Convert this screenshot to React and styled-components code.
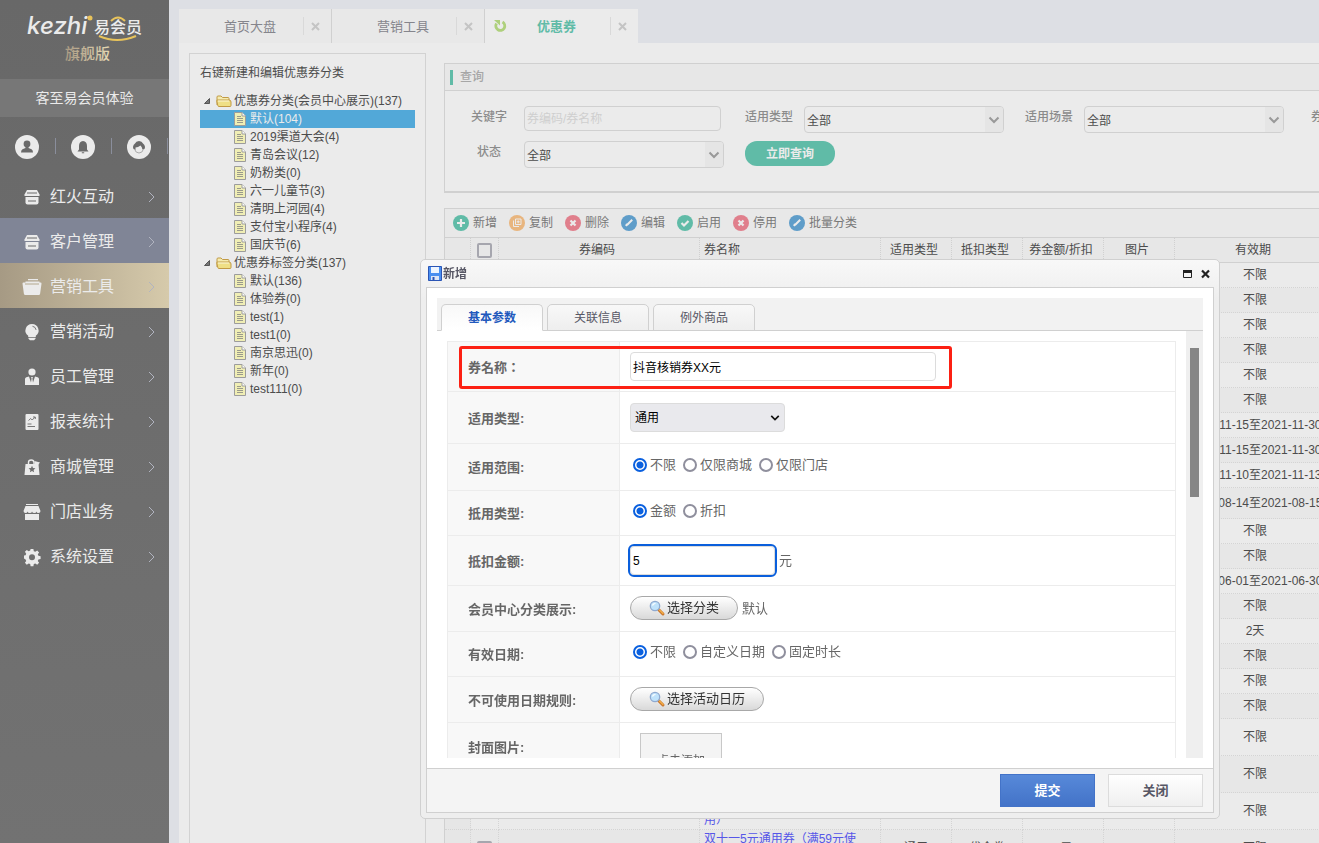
import React, { useState } from 'react';
import styled, { createGlobalStyle } from 'styled-components';

const menu = [
  { icon: 'shop', label: '红火互动' },
  { icon: 'shop', label: '客户管理', tone: 'blue' },
  { icon: 'wallet', label: '营销工具', tone: 'gold' },
  { icon: 'bulb', label: '营销活动' },
  { icon: 'staff', label: '员工管理' },
  { icon: 'report', label: '报表统计' },
  { icon: 'bag', label: '商城管理' },
  { icon: 'store', label: '门店业务' },
  { icon: 'gear', label: '系统设置' },
];

const tree = [
  {
    label: '优惠券分类(会员中心展示)(137)',
    items: ['默认(104)', '2019渠道大会(4)', '青岛会议(12)', '奶粉类(0)', '六一儿童节(3)', '清明上河园(4)', '支付宝小程序(4)', '国庆节(6)'],
  },
  {
    label: '优惠券标签分类(137)',
    items: ['默认(136)', '体验券(0)', 'test(1)', 'test1(0)', '南京思迅(0)', '新年(0)', 'test111(0)'],
  },
];

const tools = [
  { icon: 'plus', color: '#60bba7', label: '新增' },
  { icon: 'copy', color: '#e8b57e', label: '复制' },
  { icon: 'cross', color: '#e07f8c', label: '删除' },
  { icon: 'pen', color: '#5f9dc9', label: '编辑' },
  { icon: 'check', color: '#60bba7', label: '启用' },
  { icon: 'cross', color: '#e07f8c', label: '停用' },
  { icon: 'pen', color: '#5f9dc9', label: '批量分类' },
];

const columns = [
  { width: 26 },
  { width: 28, check: true },
  { width: 201, label: '券编码' },
  { width: 181, label: '券名称', left: true },
  { width: 71, label: '适用类型' },
  { width: 71, label: '抵扣类型' },
  { width: 81, label: '券金额/折扣' },
  { width: 71, label: '图片' },
  { width: 161, label: '有效期' },
];

const rows = [
  { valid: '不限' },
  { valid: '不限' },
  { valid: '不限' },
  { valid: '不限' },
  { valid: '不限' },
  { valid: '不限' },
  { valid: '2021-11-15至2021-11-30' },
  { valid: '2021-11-15至2021-11-30' },
  { valid: '2021-11-10至2021-11-13' },
  { valid: '2021-08-14至2021-08-15', height: 31 },
  { valid: '不限' },
  { valid: '不限' },
  { valid: '2021-06-01至2021-06-30' },
  { valid: '不限' },
  { valid: '2天' },
  { valid: '不限' },
  { valid: '不限' },
  { valid: '不限' },
  { valid: '不限', height: 37 },
  { valid: '不限', height: 37 },
  { valid: '不限', height: 37, name: '双十二5元通用券（满59元使用）' },
  { valid: '不限', height: 37, name: '双十一5元通用券（满59元使用）', type: '通用', kind: '代金券', amount: '5元' },
];

const menuIcons = {
  shop: (
    <>
      <path d="M5 3h10l2.500 4.500v1.500h-15V7.500z" />
      <path d="M3.500 10h13v5.500q0 2-2 2h-9q-2 0-2-2z" />
      <path d="M5 6h10M6 14h8" stroke="#6b6b6b" strokeWidth="1" />
    </>
  ),
  wallet: (
    <>
      <path d="M6 2h10v1.200H6zM3.500 4.500h14v1.800h-14z" />
      <path d="M.5 6.500q0-1 1-1h17q1.200 0 1 1.200l-1.400 10q-.2 1.300-1.400 1.300H3.300q-1.200 0-1.400-1.300z" />
      <path d="M3 7h14" stroke="#b3a88e" strokeWidth="1" />
    </>
  ),
  bulb: (
    <>
      <path d="M10 2a6.500 6.500 0 0 0-3.800 11.800V15h7.600v-1.200A6.500 6.500 0 0 0 10 2z" />
      <path d="M6.500 15.800h7v1l-1.500 1.400H8l-1.500-1.400z" />
      <path d="M10.500 4.300q3 .3 3.600 3.600" fill="none" stroke="#777" strokeWidth="1" />
    </>
  ),
  staff: (
    <>
      <circle cx="10" cy="5" r="3.600" />
      <path d="M3 18v-6q0-1.300 1.300-1.800L7 9.500l2 6 .6-4L9 10h2l-.6 1.500.6 4 2-6 2.700.7q1.300.5 1.300 1.800v6z" />
    </>
  ),
  report: (
    <>
      <rect x="3.500" y="2" width="13" height="16" rx="1" />
      <path d="M6.500 8.500l2.200-2 1.500 1.500 3-3M11 5h2.300v2M5.500 12h4M5.500 14.500h7.500" fill="none" stroke="#777" strokeWidth="1" />
    </>
  ),
  bag: (
    <>
      <path d="M3.500 7h13l1 11h-15z" />
      <path d="M6.500 7V5.500q0-2.500 2.700-2.500t2.800 2.500V7" fill="none" stroke="#ebebeb" strokeWidth="1.400" />
      <path d="M12.500 4l5.500 1.500-2.500 3-3-1.500z" />
      <path d="M10 8.800l1 2.200 2.400.3-1.800 1.600.5 2.400-2.100-1.200-2.100 1.200.5-2.400-1.800-1.600 2.400-.3z" fill="#6f6f6f" />
    </>
  ),
  store: (
    <>
      <path d="M4 2h12v1H4z" />
      <path d="M3.500 4h13l2 5q0 2-2 2t-2-1.500q-.3 1.500-2.200 1.500T10 9.500Q9.800 11 7.800 11t-2.200-1.500Q5.300 11 3.500 11t-2-2z" />
      <path d="M3 12h14v6H3z" />
    </>
  ),
  gear: (
    <path
      fillRule="evenodd"
      d="M8.600 2h2.800l.4 2.200 1.500.6 1.900-1.300 1.900 1.900-1.300 1.900.6 1.500 2.200.4v2.800l-2.200.4-.6 1.500 1.300 1.900-1.900 1.900-1.900-1.300-1.500.6-.4 2.200H8.600l-.4-2.200-1.500-.6-1.900 1.300-1.900-1.900 1.300-1.900-.6-1.500L2 11.400V8.600l1.600-.4.600-1.500-1.300-1.900 1.900-1.900 1.900 1.300 1.500-.6zM10 7.200a3 3 0 1 0 0 6 3 3 0 1 0 0-6z"
    />
  ),
};

const toolIcons = {
  plus: <path d="M8 4v8M4 8h8" strokeWidth="2.200" />,
  copy: <path d="M6.500 4h5.500v5.500H6.500zM4.500 5.500V11.500h5.500M9.200 5.300v3M7.700 6.800h3" strokeWidth="1" />,
  cross: <path d="M5.500 5.500l5 5M10.500 5.500l-5 5" strokeWidth="2.200" />,
  pen: <path d="M5 11l1-2.200M6 10l5.200-5.200" strokeWidth="2" />,
  check: <path d="M4.500 8l2.500 2.500 4.500-4.500" strokeWidth="2.200" />,
};

function Logo() {
  return (
    <svg width="120" height="52" viewBox="0 0 120 52" aria-label="Kezhi易会员旗舰版">
      <defs>
        <linearGradient id="gold" x1="0" x2="1">
          <stop offset="0" stopColor="#a99a83" />
          <stop offset="1" stopColor="#e6d9b4" />
        </linearGradient>
      </defs>
      <text x="1" y="20" fill="#ebebeb" fontFamily="Inter, sans-serif" fontSize="24" fontStyle="italic" fontWeight="500">kezhi</text>
      <circle cx="64" cy="4" r="2.500" fill="#e8c35b" />
      <text x="68" y="19" fill="#ebebeb" fontFamily="'Noto Sans CJK SC', sans-serif" fontSize="16" fontWeight="500">易会员</text>
      <path d="M85 7q7-7 14 0" fill="none" stroke="#e8c35b" strokeWidth="2" />
      <path d="M73 22q18 8 37 0" fill="none" stroke="#e8c35b" strokeWidth="2.200" />
      <text x="39" y="45" fill="url(#gold)" fontFamily="'Noto Sans CJK SC', sans-serif" fontSize="15" fontWeight="500">旗舰版</text>
    </svg>
  );
}

function FolderIcon() {
  return (
    <svg width="16" height="14" viewBox="0 0 16 14">
      <path d="M1 11V3q0-1 1-1h3l1.500 1.500H12q1 0 1 1V6" fill="#f5ecb0" stroke="#c19a45" />
      <path d="M.8 7Q.6 6 1.600 6H13q2 0 2 2v3.500q0 1-1 1H3q-1 0-1.200-1z" fill="#efdf85" stroke="#c19a45" />
      <path d="M2 7h11" stroke="#fbf7da" />
    </svg>
  );
}

function PageIcon() {
  return (
    <svg width="12" height="14" viewBox="0 0 12 14">
      <path d="M.5.500h7.500l3.500 3.500v9.500H.5z" fill="#f0eeb4" stroke="#9c9c9c" />
      <path d="M8 .5V4h3.500" fill="#fff" stroke="#9c9c9c" />
      <path d="M3 4.500h4M3 6.500h6M3 8.500h6M3 10.500h6" stroke="#9a9a8c" />
    </svg>
  );
}

function Chevron({ color = '#999', size = 12 }) {
  return (
    <svg width={size} height="8" viewBox="0 0 12 8" fill="none" stroke={color} strokeWidth="2">
      <path d="M1.500 1.500L6 6l4.500-4.500" />
    </svg>
  );
}

function SearchIcon() {
  return (
    <svg width="16" height="16" viewBox="0 0 16 16">
      <path d="M9.500 9.500l4.500 4.500" stroke="#c9752b" strokeWidth="3" strokeLinecap="round" />
      <path d="M10.500 10l3.500 3.500" stroke="#f5b04a" strokeWidth="1.200" strokeLinecap="round" />
      <circle cx="6" cy="6" r="4.700" fill="#bfe2fb" stroke="#8fa9d0" strokeWidth="1.300" />
      <path d="M3.500 5.500Q4 3.500 6.500 3.500" fill="none" stroke="#fff" strokeWidth="1.200" />
    </svg>
  );
}

function CloseIcon() {
  return (
    <svg width="9" height="9" viewBox="0 0 9 9" stroke="#c4c4c4" strokeWidth="2">
      <path d="M1 1l7 7M8 1L1 8" />
    </svg>
  );
}

function FilterSelect({ id, label }) {
  return (
    <Filter>
      <FilterLabel htmlFor={id}>{label}</FilterLabel>
      <Combo>
        <select id={id}><option>全部</option></select>
        <ComboArrow><Chevron /></ComboArrow>
      </Combo>
    </Filter>
  );
}

function Radios({ name, options }) {
  return (
    <RadioGroup>
      {options.map((option, index) => (
        <label key={option}>
          <input type="radio" name={name} defaultChecked={index === 0} />
          {option}
        </label>
      ))}
    </RadioGroup>
  );
}

function CouponDialog() {
  const [tab, setTab] = useState('基本参数');

  return (
    <Dialog role="dialog" aria-label="新增">
      <DialogTitle>
        <svg width="14" height="15" viewBox="0 0 14 15">
          <path d="M.5.500h13v14H.5z" fill="#4a8ff0" stroke="#2b55b5" />
          <path d="M3 1h8v6H3z" fill="#eef5ff" />
          <path d="M3 10h8v4H3z" fill="#dfe6f5" />
          <path d="M4.500 11h2v3h-2z" fill="#2b55b5" />
        </svg>
        <strong>新增</strong>
        <WindowButton aria-label="最大化">
          <svg width="9" height="8" viewBox="0 0 9 8"><path d="M.5 1h8v6.500h-8z" fill="none" stroke="#222" /><path d="M0 0h9v3H0z" fill="#222" /></svg>
        </WindowButton>
        <WindowButton aria-label="关闭窗口">
          <svg width="9" height="8" viewBox="0 0 9 8"><path d="M1 .5l7 7M8 .5l-7 7" stroke="#222" strokeWidth="2.200" /></svg>
        </WindowButton>
      </DialogTitle>
      <DialogBody>
        <FormArea>
          <FormTabs>
            {['基本参数', '关联信息', '例外商品'].map((name) => (
              <FormTab key={name} $active={tab === name} onClick={() => setTab(name)}>{name}</FormTab>
            ))}
          </FormTabs>
          <FormScroll>
            <FormTable>
              <tbody>
                <FormRow $height={50}>
                  <th><NameLabel htmlFor="name">券名称：</NameLabel></th>
                  <td><TextBox id="name" $wide defaultValue="抖音核销券XX元" /></td>
                </FormRow>
                <FormRow $height={52}>
                  <th><label htmlFor="kind">适用类型:</label></th>
                  <td>
                    <KindSelect>
                      <select id="kind"><option>通用</option></select>
                      <Chevron color="#111" size={10} />
                    </KindSelect>
                  </td>
                </FormRow>
                <FormRow $height={47}>
                  <th>适用范围:</th>
                  <td><Radios name="scope" options={['不限', '仅限商城', '仅限门店']} /></td>
                </FormRow>
                <FormRow $height={45}>
                  <th>抵用类型:</th>
                  <td><Radios name="deduct" options={['金额', '折扣']} /></td>
                </FormRow>
                <FormRow $height={50}>
                  <th><label htmlFor="amount">抵扣金额:</label></th>
                  <td>
                    <Inline>
                      <TextBox id="amount" defaultValue="5" autoFocus />
                      <span>元</span>
                    </Inline>
                  </td>
                </FormRow>
                <FormRow $height={46}>
                  <th>会员中心分类展示:</th>
                  <td>
                    <Inline>
                      <PickButton><SearchIcon />选择分类</PickButton>
                      <span>默认</span>
                    </Inline>
                  </td>
                </FormRow>
                <FormRow $height={45}>
                  <th>有效日期:</th>
                  <td><Radios name="valid" options={['不限', '自定义日期', '固定时长']} /></td>
                </FormRow>
                <FormRow $height={46}>
                  <th>不可使用日期规则:</th>
                  <td><PickButton><SearchIcon />选择活动日历</PickButton></td>
                </FormRow>
                <FormRow $height={102}>
                  <th className="top">封面图片:</th>
                  <td className="top"><Cover>点击添加</Cover></td>
                </FormRow>
              </tbody>
            </FormTable>
            <ScrollTrack><ScrollThumb /></ScrollTrack>
            <Highlight />
          </FormScroll>
        </FormArea>
        <DialogFooter>
          <FooterButton $primary>提交</FooterButton>
          <FooterButton>关闭</FooterButton>
        </DialogFooter>
      </DialogBody>
    </Dialog>
  );
}

export default function App() {
  const [selected, setSelected] = useState('默认(104)');

  return (
    <Page>
      <GlobalStyle />
      <Sidebar>
        <Brand><Logo /></Brand>
        <Account>客至易会员体验</Account>
        <Shortcuts>
          <Round aria-label="账户">
            <svg viewBox="0 0 24 24"><circle cx="12" cy="9" r="3.400" /><path d="M10.500 11h3v2l3 1.200q1.500.8 1.500 3.300H6q0-2.500 1.500-3.300l3-1.200z" /></svg>
          </Round>
          <Round aria-label="通知">
            <svg viewBox="0 0 24 24"><path d="M12 6q4 .5 4 5v3.500l1.500 2h-11l1.500-2V11q0-4.500 4-5zM10.800 17.300h2.400v1h-2.400z" /></svg>
          </Round>
          <Round aria-label="客服">
            <svg viewBox="0 0 24 24"><path d="M6.500 14Q5 11 8 8.500q1-2.500 4-2.500t4 2.500q3 2.500 1.500 5.500l-2 .5Q15 12 13.500 10.500 11 12.500 8.500 12.500V15z" /><path d="M7.500 14q1 4 4.500 4t4.500-4" fill="none" stroke="#aaa" /></svg>
          </Round>
        </Shortcuts>
        <nav>
          {menu.map((item) => (
            <MenuItem key={item.label} href="#" $tone={item.tone}>
              <svg width="20" height="20" viewBox="0 0 20 20" fill="#ebebeb">{menuIcons[item.icon]}</svg>
              <span>{item.label}</span>
              <svg width="7" height="12" viewBox="0 0 7 12" fill="none" stroke="#b1b4c0"><path d="M1 1l5 5-5 5" /></svg>
            </MenuItem>
          ))}
        </nav>
      </Sidebar>
      <Main>
        <PageTabs>
          <PageTab><TabName>首页大盘</TabName><TabClose aria-label="关闭首页大盘"><CloseIcon /></TabClose></PageTab>
          <PageTab><TabName>营销工具</TabName><TabClose aria-label="关闭营销工具"><CloseIcon /></TabClose></PageTab>
          <PageTab $active>
            <Refresh aria-label="刷新">
              <svg width="14" height="14" viewBox="0 0 14 14"><path d="M9.500 3a4.500 4.500 0 1 1-6 1.500" fill="none" stroke="#aed07c" strokeWidth="2.800" /><path d="M1 1h6v5.500z" fill="#aed07c" /></svg>
            </Refresh>
            <TabName $active>优惠券</TabName>
            <TabClose aria-label="关闭优惠券"><CloseIcon /></TabClose>
          </PageTab>
        </PageTabs>
        <Workspace>
          <TreePanel>
            <p>右键新建和编辑优惠券分类</p>
            {tree.map((group) => (
              <ul key={group.label}>
                <TreeNode>
                  <svg width="6" height="6" viewBox="0 0 6 6"><path d="M5.500.500v5H.5z" fill="#777" stroke="#555" /></svg>
                  <FolderIcon />
                  {group.label}
                </TreeNode>
                {group.items.map((item) => (
                  <TreeLeaf key={item} $active={selected === item} onClick={() => setSelected(item)}>
                    <PageIcon />
                    {item}
                  </TreeLeaf>
                ))}
              </ul>
            ))}
          </TreePanel>
          <Content>
            <QueryPanel>
              <h2>查询</h2>
              <Filters>
                <FilterLine>
                  <Filter>
                    <FilterLabel htmlFor="keyword">关键字</FilterLabel>
                    <Keyword id="keyword" placeholder="券编码/券名称" />
                  </Filter>
                  <FilterSelect id="type" label="适用类型" />
                  <FilterSelect id="scene" label="适用场景" />
                  <FilterSelect id="category" label="券分类" />
                </FilterLine>
                <FilterLine>
                  <FilterSelect id="status" label="状态" />
                  <QueryButton>立即查询</QueryButton>
                </FilterLine>
              </Filters>
            </QueryPanel>
            <Grid>
              <Toolbar>
                {tools.map((tool) => (
                  <ToolButton key={tool.label}>
                    <svg width="16" height="16" viewBox="0 0 16 16" fill="none" stroke="#ebebeb">
                      <circle cx="8" cy="8" r="8" fill={tool.color} stroke="none" />
                      {toolIcons[tool.icon]}
                    </svg>
                    {tool.label}
                  </ToolButton>
                ))}
              </Toolbar>
              <CouponTable>
                <colgroup>
                  {columns.map((column, index) => <Col key={index} $width={column.width} />)}
                </colgroup>
                <thead>
                  <tr>
                    {columns.map((column, index) => (
                      <HeadCell key={index} $left={column.left}>
                        {column.check ? <Check type="checkbox" aria-label="全选" /> : column.label}
                      </HeadCell>
                    ))}
                  </tr>
                </thead>
                <tbody>
                  {rows.map((row, index) => (
                    <CouponRow key={index} $height={row.height || 25}>
                      <td />
                      <td><Check type="checkbox" aria-label="选择" /></td>
                      <td />
                      <NameCell>{row.name && <a href="#">{row.name}</a>}</NameCell>
                      <td>{row.type}</td>
                      <td>{row.kind}</td>
                      <td>{row.amount}</td>
                      <td />
                      <td>{row.valid}</td>
                    </CouponRow>
                  ))}
                </tbody>
              </CouponTable>
            </Grid>
          </Content>
        </Workspace>
      </Main>
      <CouponDialog />
    </Page>
  );
}

const GlobalStyle = createGlobalStyle`
  * {
    box-sizing: border-box;
  }
  body {
    margin: 0;
    background: #ebebeb;
    color: #4c4c4c;
    font: 12px/18px "Liberation Sans", "Noto Sans CJK SC", sans-serif;
  }
  button, input, select {
    margin: 0;
    font: inherit;
  }
  button {
    padding: 0;
    border: 0;
    background: none;
    color: inherit;
    cursor: pointer;
  }
  ul, p, h2 {
    margin: 0;
    padding: 0;
    list-style: none;
  }
  svg {
    flex: none;
    overflow: visible;
  }
`;

const Page = styled.div`
  display: flex;
  height: 100vh;
  overflow: hidden;
`;

const Sidebar = styled.aside`
  flex: none;
  width: 169px;
  background: linear-gradient(#686868, #727272);
  color: #ebebeb;
`;

const Brand = styled.div`
  display: flex;
  justify-content: center;
  height: 79px;
  padding: 14px 0 0 3px;
`;

const Account = styled.div`
  padding: 8px 0;
  background: #777;
  font-size: 14px;
  line-height: 22px;
  text-align: center;
`;

const Shortcuts = styled.div`
  display: flex;
  align-items: center;
  gap: 32px;
  padding: 18px 15px 14px;
`;

const Round = styled.button`
  position: relative;
  width: 24px;
  height: 24px;
  border-radius: 50%;
  background: #ebebeb;
  svg {
    display: block;
    fill: #6a6a6a;
  }
  &::after {
    content: '';
    position: absolute;
    top: 3px;
    right: -17px;
    width: 1px;
    height: 16px;
    background: #8a8e9c;
  }
`;

const tones = {
  blue: '#808596',
  gold: 'linear-gradient(90deg, #a69a84, #d6caab)',
};

const MenuItem = styled.a`
  display: flex;
  align-items: center;
  height: 45px;
  padding: 2px 14px 0 22px;
  background: ${(props) => tones[props.$tone] || 'none'};
  color: #ebebeb;
  font-size: 16px;
  line-height: 24px;
  text-decoration: none;
  span {
    flex: 1;
    padding-left: 8px;
  }
`;

const Main = styled.main`
  display: flex;
  flex: 1;
  flex-direction: column;
  min-width: 0;
  padding: 9px 0 0 10px;
  background: #dddfe4;
`;

const PageTabs = styled.div`
  display: flex;
  flex: none;
  height: 34px;
`;

const PageTab = styled.div`
  display: flex;
  align-items: center;
  width: 153px;
  border-right: ${(props) => (props.$active ? '0' : '1px solid #d0d0d0')};
  background: ${(props) => (props.$active ? '#ebebeb' : '#e8e8e8')};
  color: ${(props) => (props.$active ? '#60bba7' : '#85858c')};
  font-size: 13px;
  font-weight: ${(props) => (props.$active ? 'bold' : 'normal')};
`;

const TabName = styled.span`
  flex: 1;
  padding: ${(props) => (props.$active ? '2px 4px 0 0' : '2px 0 0 18px')};
  text-align: center;
`;

const TabClose = styled.button`
  display: flex;
  align-items: center;
  width: 28px;
  height: 18px;
  padding-left: 7px;
  border-left: 1px solid #d9d9d9;
`;

const Refresh = styled.button`
  display: flex;
  width: 14px;
  margin-left: 8px;
`;

const Workspace = styled.div`
  display: flex;
  flex: 1;
  gap: 18px;
  min-height: 0;
  padding: 10px 0 0 10px;
  background: #ebebeb;
`;

const TreePanel = styled.section`
  flex: none;
  width: 237px;
  padding: 10px;
  border: 1px solid #d2d2d2;
  border-bottom: 0;
  white-space: nowrap;
  p {
    padding-bottom: 10px;
  }
`;

const TreeNode = styled.li`
  display: flex;
  align-items: center;
  gap: 2px;
  height: 18px;
  padding-left: 4px;
  svg:first-child {
    margin-right: 4px;
  }
`;

const TreeLeaf = styled.li`
  display: flex;
  align-items: center;
  gap: 4px;
  height: 18px;
  padding-left: 34px;
  background: ${(props) => (props.$active ? '#52a8d8' : 'none')};
  color: ${(props) => (props.$active ? '#ebebeb' : 'inherit')};
  cursor: pointer;
`;

const Content = styled.section`
  display: flex;
  flex: 1;
  flex-direction: column;
  gap: 15px;
  min-width: 0;
  padding-top: 10px;
  overflow: hidden;
`;

const QueryPanel = styled.section`
  flex: none;
  border: 1px solid #d0d0d0;
  border-width: 1px 0 2px 1px;
  h2 {
    display: flex;
    align-items: center;
    height: 27px;
    border-bottom: 1px solid #d0d0d0;
    background: #e7e7e7;
    color: #a6a6a6;
    font-size: 12px;
    font-weight: 500;
  }
  h2::before {
    content: '';
    width: 3px;
    height: 15px;
    margin: 0 7px 0 5px;
    background: #60bba7;
  }
`;

const Filters = styled.form`
  display: flex;
  flex-direction: column;
  gap: 8px;
  padding: 15px 0 23px 20px;
`;

const FilterLine = styled.div`
  display: flex;
  align-items: flex-start;
`;

const Filter = styled.div`
  display: flex;
  flex: none;
  width: 280px;
`;

const FilterLabel = styled.label`
  width: 48px;
  margin-right: 11px;
  padding-top: 2px;
  color: #8b8b8b;
  font-weight: 500;
  text-align: center;
  white-space: nowrap;
`;

const Keyword = styled.input`
  width: 197px;
  height: 25px;
  padding: 2px;
  border: 1px solid #d0d0d0;
  border-radius: 4px;
  background: none;
  &::placeholder {
    color: #cfcfcf;
  }
`;

const Combo = styled.div`
  display: flex;
  width: 200px;
  height: 27px;
  border: 1px solid #d0d0d0;
  border-radius: 4px;
  overflow: hidden;
  select {
    flex: 1;
    padding: 2px 2px 0;
    border: 0;
    background: none;
    color: #4c4c4c;
    appearance: none;
  }
`;

const ComboArrow = styled.span`
  display: flex;
  align-items: center;
  justify-content: center;
  width: 18px;
  background: #e5e5e5;
`;

const QueryButton = styled.button`
  width: 90px;
  height: 25px;
  border-radius: 12px;
  background: #60bba7;
  color: #ebebeb;
  font-weight: bold;
`;

const Grid = styled.section`
  flex: 1;
  min-height: 0;
  border: 1px solid #d0d0d0;
  border-width: 1px 0 0 1px;
`;

const Toolbar = styled.div`
  display: flex;
  gap: 12px;
  padding: 5px 8px;
  border-bottom: 1px solid #d0d0d0;
  background: #e8e8e8;
`;

const ToolButton = styled.button`
  display: flex;
  align-items: center;
  gap: 4px;
  color: #787878;
`;

const CouponTable = styled.table`
  width: 891px;
  border-collapse: separate;
  border-spacing: 0;
  table-layout: fixed;
  text-align: center;
`;

const Col = styled.col`
  width: ${(props) => props.$width}px;
`;

const HeadCell = styled.th`
  height: 25px;
  padding: ${(props) => (props.$left ? '0 4px' : '0 4px 0 0')};
  border-right: 1px dotted #d0d0d0;
  border-bottom: 1px solid #d0d0d0;
  background: #e7e7e7;
  font-weight: normal;
  text-align: ${(props) => (props.$left ? 'left' : 'center')};
  white-space: nowrap;
`;

const CouponRow = styled.tr`
  height: ${(props) => props.$height}px;
  &:nth-child(even) {
    background: #e7e7e7;
  }
  td {
    padding: 0;
    border-right: 1px dotted #d4d4d4;
    border-bottom: 1px dotted #d4d4d4;
  }
  td:first-child {
    background: #e6e6e6;
  }
`;

const NameCell = styled.td`
  && {
    padding: 0 16px 0 4px;
    text-align: left;
  }
  a {
    color: #5656e8;
    text-decoration: none;
  }
`;

const Check = styled.input`
  display: block;
  width: 15px;
  height: 15px;
  margin: 0 auto;
  border: 2px solid #a6a6ae;
  border-radius: 2px;
  appearance: none;
  ${HeadCell} & {
    margin: 0 6px;
  }
`;

const Dialog = styled.section`
  position: fixed;
  inset: 259px 99px 24px 420px;
  display: flex;
  flex-direction: column;
  padding: 0 5px 5px;
  border: 1px solid #d0d0d0;
  border-radius: 5px;
  background: linear-gradient(#f8f8f8, #eee 40px);
  color: #666;
`;

const DialogTitle = styled.header`
  display: flex;
  align-items: center;
  height: 27px;
  padding-left: 2px;
  color: #575765;
  strong {
    flex: 1;
    padding-left: 1px;
  }
`;

const WindowButton = styled.button`
  display: flex;
  align-items: center;
  justify-content: center;
  width: 18px;
  height: 18px;
`;

const DialogBody = styled.div`
  display: flex;
  flex: 1;
  flex-direction: column;
  min-height: 0;
  border: 1px solid #d0d0d0;
`;

const FormArea = styled.div`
  display: flex;
  flex: 1;
  flex-direction: column;
  min-height: 0;
  padding: 10px;
  background: #fff;
`;

const FormTabs = styled.div`
  display: flex;
  flex: none;
  align-items: flex-end;
  gap: 4px;
  height: 33px;
  padding: 0 4px;
  border-bottom: 1px solid #d0d0d0;
  background: #f2f2f2;
`;

const FormTab = styled.button`
  width: 102px;
  height: 27px;
  margin-bottom: -1px;
  border: 1px solid #d0d0d0;
  border-bottom-color: ${(props) => (props.$active ? '#fff' : '#d0d0d0')};
  border-radius: 5px 5px 0 0;
  background: ${(props) => (props.$active ? 'linear-gradient(#f8f8f8, #fff)' : 'linear-gradient(#f8f8f8, #eee)')};
  color: ${(props) => (props.$active ? '#2259bd' : '#575765')};
  font-weight: ${(props) => (props.$active ? 'bold' : 'normal')};
`;

const FormScroll = styled.div`
  position: relative;
  display: flex;
  flex: 1;
  align-items: flex-start;
  min-height: 0;
  padding-left: 10px;
  overflow: hidden;
`;

const FormTable = styled.table`
  flex: 1;
  margin: 10px 10px 0 0;
  border: 1px solid #ececec;
  border-width: 1px 1px 0;
  border-spacing: 0;
  font-size: 13px;
`;

const FormRow = styled.tr`
  height: ${(props) => props.$height}px;
  th, td {
    padding: 0 0 0 10px;
    border-bottom: 1px solid #ececec;
    text-align: left;
  }
  th {
    width: 172px;
    padding: 2px 0 0 20px;
    border-right: 1px solid #ececec;
    background: #f8f8f8;
  }
  .top {
    padding-top: 10px;
    vertical-align: top;
  }
  th.top {
    padding-top: 16px;
  }
`;

/* the traditional face centres the full-width colon */
const NameLabel = styled.label`
  font-family: "Noto Sans CJK TC", sans-serif;
`;

const TextBox = styled.input`
  display: block;
  width: ${(props) => (props.$wide ? 306 : 145)}px;
  height: 29px;
  padding: 0 2px;
  border: 1px solid #dcdcdc;
  border-radius: 4px;
  background: #fff;
  color: #000;
  font-size: 12px;
  &:focus {
    outline: 2px solid #0a5fdc;
  }
`;

const KindSelect = styled.div`
  display: flex;
  align-items: center;
  width: 155px;
  height: 29px;
  padding-right: 4px;
  border: 1px solid #dcdcdc;
  border-radius: 4px;
  background: #e9e9ed;
  select {
    flex: 1;
    padding: 0 4px;
    border: 0;
    background: none;
    color: #000;
    font-size: 12px;
    appearance: none;
  }
`;

const RadioGroup = styled.div`
  display: flex;
  gap: 7px;
  padding: 0 0 4px 3px;
  label {
    display: flex;
    align-items: center;
    gap: 3px;
  }
  input {
    width: 14px;
    height: 14px;
    border: 2px solid #8f8f9d;
    border-radius: 50%;
    background: #fff;
    appearance: none;
  }
  input:checked {
    border-color: #0a60df;
    background: radial-gradient(#0a60df 3px, #fff 4px);
  }
`;

const Inline = styled.div`
  display: flex;
  align-items: center;
  gap: 4px;
`;

const PickButton = styled.button`
  display: flex;
  align-items: center;
  gap: 2px;
  height: 24px;
  margin-bottom: 2px;
  padding: 0 18px;
  border: 1px solid #a8a8a8;
  border-radius: 12px;
  background: linear-gradient(#fff, #d9d9d9);
  color: #333;
`;

const Cover = styled.div`
  width: 82px;
  height: 82px;
  margin-left: 10px;
  padding-top: 18px;
  border: 1px solid #c8c8c8;
  background: #f4f4f4;
  font-size: 12px;
  text-align: center;
`;

const ScrollTrack = styled.div`
  align-self: stretch;
  width: 17px;
  padding: 17px 4px;
  background: #efefef;
`;

const ScrollThumb = styled.div`
  height: 35%;
  min-height: 149px;
  background: #868686;
`;

/* red frame drawn over the coupon name row */
const Highlight = styled.div`
  position: absolute;
  top: 15px;
  left: 22px;
  width: 493px;
  height: 43px;
  border: 3px solid #fc2013;
  border-radius: 3px;
  pointer-events: none;
`;

const DialogFooter = styled.footer`
  display: flex;
  justify-content: flex-end;
  gap: 13px;
  padding: 5px 10px;
  border-top: 1px solid #d0d0d0;
  background: #f4f4f4;
`;

const FooterButton = styled.button`
  width: 95px;
  height: 33px;
  border: 1px solid ${(props) => (props.$primary ? '#4373c8' : '#dcdcdc')};
  background: ${(props) => (props.$primary ? 'linear-gradient(#5789d9, #4373c8)' : 'linear-gradient(#fff, #efefef)')};
  color: ${(props) => (props.$primary ? '#fff' : '#575765')};
  font-size: 13px;
  font-weight: bold;
`;
